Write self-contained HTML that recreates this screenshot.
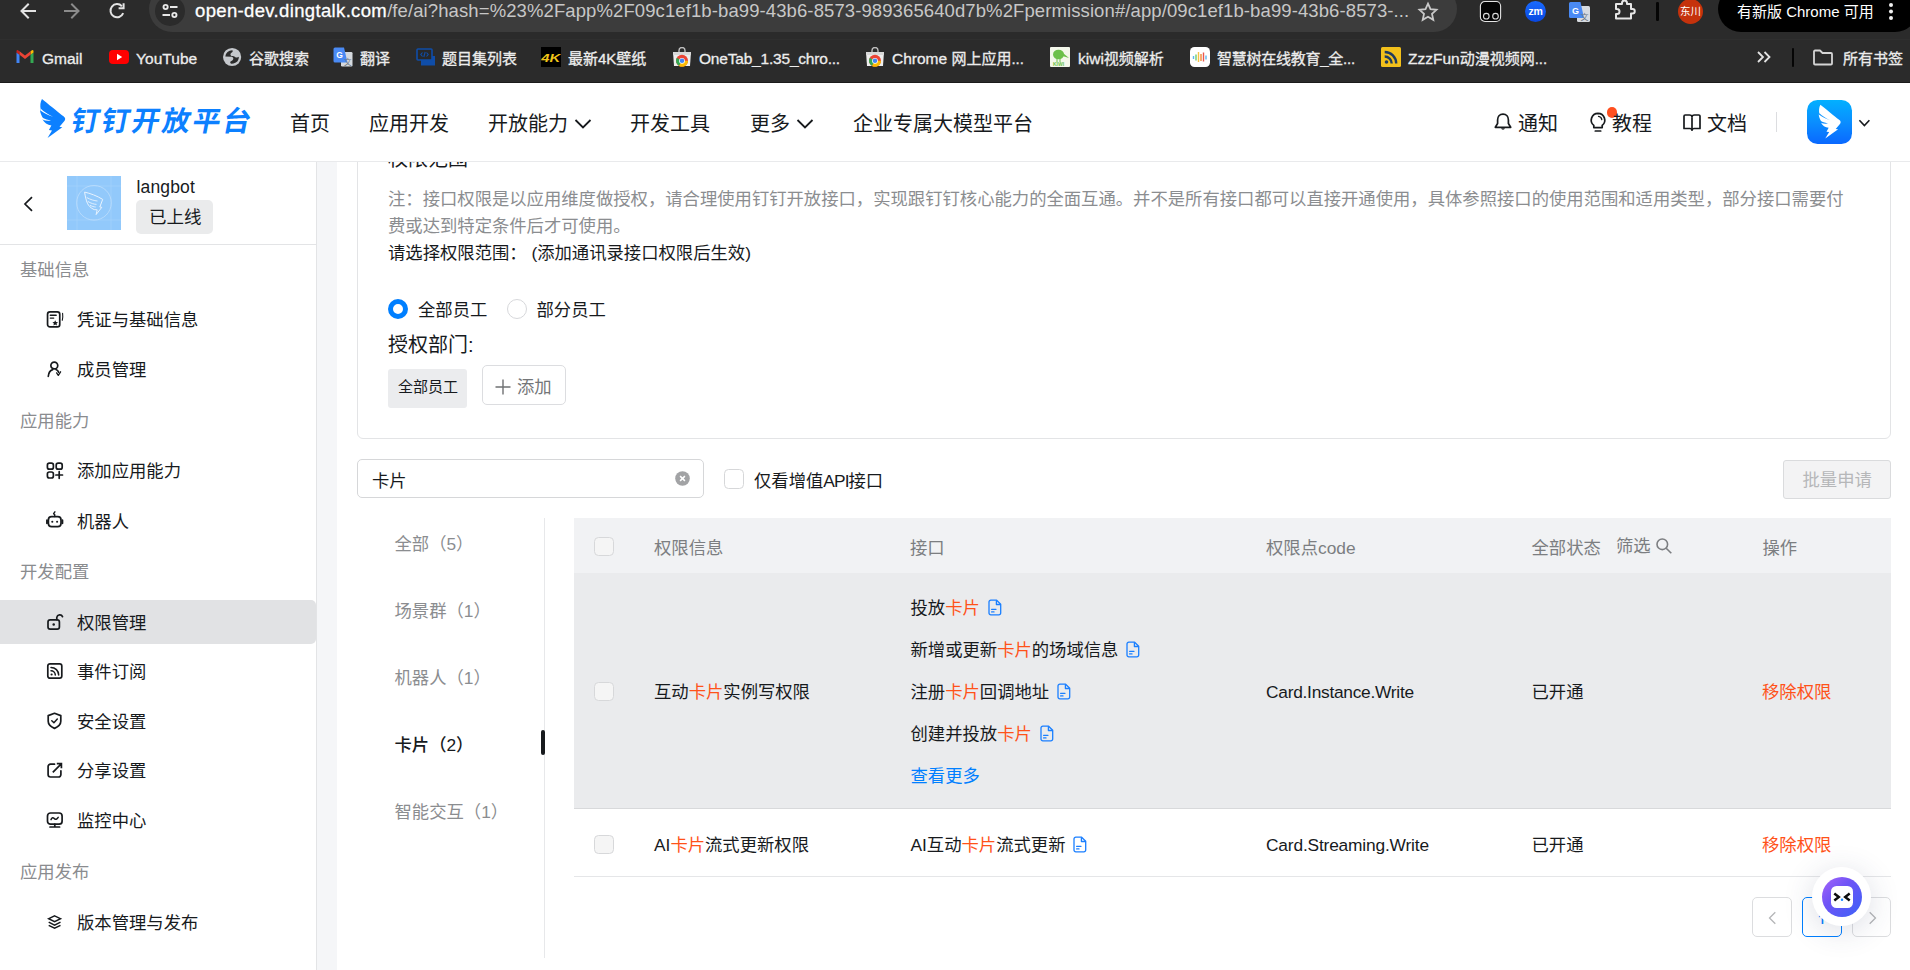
<!DOCTYPE html>
<html lang="zh-CN">
<head>
<meta charset="utf-8">
<title>钉钉开放平台</title>
<style>
*{box-sizing:border-box;margin:0;padding:0}
html,body{width:1910px;height:970px;overflow:hidden;background:#f5f6f8}
body{font-family:"Liberation Sans","Noto Sans CJK SC",sans-serif;font-size:17.5px;color:#171a1d;position:relative}
.abs{position:absolute}
svg{display:block}

/* ---------- browser chrome ---------- */
#chrome{position:absolute;left:0;top:0;width:1910px;height:83px;background:#2b2b2b;color:#e8e8e8;border-bottom:1px solid #1b1b1b}
#urlbar{position:absolute;left:149px;top:-14px;width:1308px;height:46px;border-radius:23px;background:#3c3c3c}
#urltext{position:absolute;left:195px;top:-1px;font-size:18.5px;line-height:24px;color:#c7c7c7;white-space:nowrap;letter-spacing:0.1px}
#tbsep{position:absolute;left:0;top:39px;width:1910px;height:1px;background:#2f2f2f}
#urltext b{-webkit-text-stroke:0.300px #fff;font-weight:normal;color:#fff;letter-spacing:0.35px}
.bm{-webkit-text-stroke:0.300px #ededed;position:absolute;top:46.700px;font-size:15.5px;line-height:24px;color:#ededed;white-space:nowrap}

/* ---------- page header ---------- */
#hdr{position:absolute;left:0;top:83px;width:1910px;height:79px;background:#fff;border-bottom:1px solid #e9eaec}
.nav{position:absolute;top:26.800px;font-size:20px;line-height:28px;color:#171a1d;white-space:nowrap}

#logot{position:absolute;left:67.500px;top:21px;font-size:28px;line-height:36px;font-weight:bold;color:#0c80ff;white-space:nowrap;letter-spacing:2.300px;transform:skewX(-11deg);transform-origin:left bottom}

/* ---------- sidebar ---------- */
#side{position:absolute;left:0;top:162px;width:317px;height:808px;background:#fff;border-right:1px solid #e3e4e6}
.sec{position:absolute;left:20px;font-size:17.330px;line-height:24px;color:#8a8c8f;white-space:nowrap}
.it{position:absolute;left:77px;font-size:17.330px;margin-top:0.400px;line-height:24px;color:#171a1d;white-space:nowrap}
.ic{position:absolute;left:45px;width:20px;height:20px}

/* ---------- main ---------- */
#card{position:absolute;left:357px;top:120px;width:1534px;height:319px;background:#fff;border:1px solid #e3e4e6;border-radius:6px}
.t{position:absolute;white-space:nowrap;line-height:24px;font-size:17.330px;margin-top:0.400px}
.tab{letter-spacing:0}
.hl{color:#ff5219}
.lnk{color:#007fff}
</style>
</head>
<body>

<!-- main content card (scrolled under header) -->
<!-- main -->
<div class="abs" style="left:337px;top:162px;width:1573px;height:808px;background:#fff"></div>
<div id="card"></div>
<div class="t" style="left:388px;top:146.5px;font-size:20px">权限范围</div>
<div class="abs" id="note" style="left:388px;top:185.500px;width:1471px;font-size:17.330px;line-height:27.300px;color:#8b8d90">注：接口权限是以应用维度做授权，请合理使用钉钉开放接口，实现跟钉钉核心能力的全面互通。并不是所有接口都可以直接开通使用，具体参照接口的使用范围和适用类型，部分接口需要付<br>费或达到特定条件后才可使用。<br><span style="color:#171a1d">请选择权限范围： (添加通讯录接口权限后生效)</span></div>
<div class="abs" style="left:388px;top:299px;width:20px;height:20px;border-radius:10px;border:5.500px solid #007fff;background:#fff"></div>
<div class="t" style="left:418px;top:297.5px;">全部员工</div>
<div class="abs" style="left:507px;top:299px;width:20px;height:20px;border-radius:10px;border:1.500px solid #d7d8db;background:#fff"></div>
<div class="t" style="left:536.5px;top:297.5px;">部分员工</div>
<div class="t" style="left:388px;top:332.5px;font-size:20px">授权部门:</div>
<div class="abs" style="left:388px;top:369px;width:79px;height:39px;border-radius:3px;background:#ebecee"></div>
<div class="t" style="left:398px;top:374.8px;font-size:15px">全部员工</div>
<div class="abs" style="left:482px;top:365px;width:84px;height:40px;border-radius:5px;border:1px solid #dcdde0;background:#fff"></div>
<svg class="abs" style="left:495px;top:379px" width="16" height="16" viewBox="0 0 16 16" fill="none" stroke="#6f7173" stroke-width="1.400"><path d="M8 0.500V15.500M0.500 8H15.500"/></svg>
<div class="t" style="left:517px;top:374.5px;color:#747678">添加</div>
<div class="abs" style="left:357px;top:459px;width:347px;height:39px;border-radius:5px;border:1px solid #d6d7d9;background:#fff"></div>
<div class="t" style="left:372px;top:468.3px;">卡片</div>
<svg class="abs" style="left:674.500px;top:471px" width="15" height="15" viewBox="0 0 15 15"><circle cx="7.500" cy="7.500" r="7.300" fill="#a2a3a5"/><path d="M5.100 5.100L9.900 9.900M9.900 5.100L5.100 9.900" stroke="#fff" stroke-width="1.500"/></svg>
<div class="abs" style="left:724px;top:469px;width:20px;height:20px;border:1.500px solid #d6d7d9;border-radius:4.500px;background:#fff"></div>
<div class="t" style="left:754px;top:468.3px;letter-spacing:0">仅看增值<span style="letter-spacing:-0.900px">API</span>接口</div>
<div class="abs" style="left:1783px;top:460px;width:108px;height:39px;border-radius:3px;border:1px solid #dadbdd;background:#f3f3f4"></div>
<div class="t" style="left:1802.5px;top:468px;color:#b6b7b9">批量申请</div>
<div class="abs" style="left:544px;top:518px;width:1px;height:440px;background:#e7e8ea"></div>
<div class="abs" style="left:541px;top:730px;width:4px;height:25px;border-radius:2px;background:#171a1d"></div>
<div class="t tab" style="left:394.5px;top:531.5px;color:#8b8d90">全部（5）</div>
<div class="t tab" style="left:394.5px;top:598.5px;color:#8b8d90">场景群（1）</div>
<div class="t tab" style="left:394.5px;top:665.5px;color:#8b8d90">机器人（1）</div>
<div class="t tab" style="left:394.5px;top:732.5px;color:#171a1d;font-weight:500">卡片（2）</div>
<div class="t tab" style="left:394.5px;top:799.5px;color:#8b8d90">智能交互（1）</div>
<div class="abs" style="left:574px;top:518px;width:1317px;height:55px;background:#f1f2f4"></div>
<div class="abs" style="left:574px;top:573px;width:1317px;height:235px;background:#eaebed"></div>
<div class="abs" style="left:574px;top:808px;width:1317px;height:1px;background:#d8d9db"></div>
<div class="abs" style="left:574px;top:876px;width:1317px;height:1px;background:#e5e6e8"></div>
<div class="abs" style="left:594.300px;top:537px;width:19.400px;height:19px;border:1.500px solid #d7d8da;border-radius:4.500px;background:#f5f5f5"></div>
<div class="t" style="left:654px;top:535.3px;color:#7c7e81">权限信息</div>
<div class="t" style="left:910px;top:535.3px;color:#7c7e81">接口</div>
<div class="t" style="left:1266px;top:535.3px;color:#7c7e81">权限点code</div>
<div class="t" style="left:1531.5px;top:535.3px;color:#7c7e81">全部状态</div>
<div class="t" style="left:1616px;top:534px;color:#7c7e81">筛选</div>
<svg class="abs" style="left:1655px;top:537px" width="18" height="18" viewBox="0 0 18 18" fill="none" stroke="#7c7e81" stroke-width="1.600"><circle cx="7.300" cy="7.300" r="5.300"/><path d="M11.200 11.200L16.300 16.300"/></svg>
<div class="t" style="left:1762.5px;top:535.3px;color:#7c7e81">操作</div>
<div class="abs" style="left:594.300px;top:682.3px;width:19.400px;height:19px;border:1.500px solid #d7d8da;border-radius:4.500px;background:#f5f5f5"></div>
<div class="t" style="left:654px;top:680px;">互动<span class="hl">卡片</span>实例写权限</div>
<div class="t" style="left:910.5px;top:596px;">投放<span class="hl">卡片</span></div>
<svg class="abs" style="left:987.82px;top:599.2px" width="14" height="17" viewBox="0 0 14 17" fill="none" stroke="#1a7fff" stroke-width="1.300" stroke-linejoin="round"><path d="M2.800 1.200H8.600L12.700 5.300V14A1.800 1.800 0 0 1 10.900 15.800H2.800A1.800 1.800 0 0 1 1 14V3A1.800 1.800 0 0 1 2.800 1.200z"/><path d="M8.400 1.400V5.500H12.500"/><path d="M3.600 10.300H8M3.600 12.900H6" stroke-linecap="round"/></svg>
<div class="t" style="left:910.5px;top:638px;">新增或更新<span class="hl">卡片</span>的场域信息</div>
<svg class="abs" style="left:1126.46px;top:641.2px" width="14" height="17" viewBox="0 0 14 17" fill="none" stroke="#1a7fff" stroke-width="1.300" stroke-linejoin="round"><path d="M2.800 1.200H8.600L12.700 5.300V14A1.800 1.800 0 0 1 10.900 15.800H2.800A1.800 1.800 0 0 1 1 14V3A1.800 1.800 0 0 1 2.800 1.200z"/><path d="M8.400 1.400V5.500H12.500"/><path d="M3.600 10.300H8M3.600 12.900H6" stroke-linecap="round"/></svg>
<div class="t" style="left:910.5px;top:680px;">注册<span class="hl">卡片</span>回调地址</div>
<svg class="abs" style="left:1057.14px;top:683.2px" width="14" height="17" viewBox="0 0 14 17" fill="none" stroke="#1a7fff" stroke-width="1.300" stroke-linejoin="round"><path d="M2.800 1.200H8.600L12.700 5.300V14A1.800 1.800 0 0 1 10.900 15.800H2.800A1.800 1.800 0 0 1 1 14V3A1.800 1.800 0 0 1 2.800 1.200z"/><path d="M8.400 1.400V5.500H12.500"/><path d="M3.600 10.300H8M3.600 12.900H6" stroke-linecap="round"/></svg>
<div class="t" style="left:910.5px;top:722px;">创建并投放<span class="hl">卡片</span></div>
<svg class="abs" style="left:1039.81px;top:725.2px" width="14" height="17" viewBox="0 0 14 17" fill="none" stroke="#1a7fff" stroke-width="1.300" stroke-linejoin="round"><path d="M2.800 1.200H8.600L12.700 5.300V14A1.800 1.800 0 0 1 10.900 15.800H2.800A1.800 1.800 0 0 1 1 14V3A1.800 1.800 0 0 1 2.800 1.200z"/><path d="M8.400 1.400V5.500H12.500"/><path d="M3.600 10.300H8M3.600 12.900H6" stroke-linecap="round"/></svg>
<div class="t" style="left:910.5px;top:764px;color:#007fff">查看更多</div>
<div class="t" style="left:1266px;top:680px;"><span style="letter-spacing:-0.260px">Card.Instance.Write</span></div>
<div class="t" style="left:1531.5px;top:680px;">已开通</div>
<div class="t" style="left:1762px;top:680px;color:#ff5219">移除权限</div>
<div class="abs" style="left:594.300px;top:834.8px;width:19.400px;height:19px;border:1.500px solid #d7d8da;border-radius:4.500px;background:#f5f5f5"></div>
<div class="t" style="left:654px;top:832.5px;">AI<span class="hl">卡片</span>流式更新权限</div>
<div class="t" style="left:910.5px;top:832.5px;"><span id="ai2">AI互动<span class="hl">卡片</span>流式更新</span></div>
<svg class="abs" style="left:1073px;top:835.7px" width="14" height="17" viewBox="0 0 14 17" fill="none" stroke="#1a7fff" stroke-width="1.300" stroke-linejoin="round"><path d="M2.800 1.200H8.600L12.700 5.300V14A1.800 1.800 0 0 1 10.900 15.800H2.800A1.800 1.800 0 0 1 1 14V3A1.800 1.800 0 0 1 2.800 1.200z"/><path d="M8.400 1.400V5.500H12.500"/><path d="M3.600 10.300H8M3.600 12.900H6" stroke-linecap="round"/></svg>
<div class="t" style="left:1266px;top:832.5px;"><span style="letter-spacing:-0.170px">Card.Streaming.Write</span></div>
<div class="t" style="left:1531.5px;top:832.5px;">已开通</div>
<div class="t" style="left:1762px;top:832.5px;color:#ff5219">移除权限</div>
<div class="abs" style="left:1752px;top:897px;width:40px;height:40px;border-radius:5px;border:1px solid #dcdddf;background:#fff"></div>
<svg class="abs" style="left:1767.500px;top:910.500px" width="9" height="14" viewBox="0 0 9 14" fill="none" stroke="#b4b5b7" stroke-width="1.300"><path d="M7.300 1.200L1.500 7L7.300 12.800"/></svg>
<div class="abs" style="left:1802px;top:897px;width:40px;height:40px;border-radius:5px;border:1.500px solid #007fff;background:#fff"></div>
<div class="abs" style="left:1803.500px;top:899px;width:37px;height:25px;overflow:hidden;color:#007fff;text-align:center;font-size:17.330px;line-height:24px"><div style="position:absolute;left:0;top:9.200px;width:37px">1</div></div>
<div class="abs" style="left:1852px;top:897px;width:39px;height:40px;border-radius:5px;border:1px solid #dcdddf;background:#fff"></div>
<svg class="abs" style="left:1867.500px;top:910.500px" width="9" height="14" viewBox="0 0 9 14" fill="none" stroke="#b4b5b7" stroke-width="1.300"><path d="M1.700 1.200L7.500 7L1.700 12.800"/></svg>
<div class="abs" style="left:1812px;top:867px;width:59px;height:59px;border-radius:30px;background:#fff;box-shadow:0 5px 30px rgba(50,60,100,0.170)"></div>
<div class="abs" style="left:1821.500px;top:876.500px;width:40px;height:40px;border-radius:20px;background:linear-gradient(135deg,#a865fa 0%,#6f54f6 40%,#3a62f8 100%)"></div>
<div class="abs" style="left:1831px;top:886px;width:22px;height:22px;border-radius:5.500px;background:#fff"></div>
<svg class="abs" style="left:1831px;top:886px" width="22" height="22" viewBox="0 0 22 22" fill="none" stroke="#0c0c0c" stroke-width="2.500" stroke-linejoin="miter" stroke-miterlimit="6"><path d="M3.300 7.500L7.800 11.050L3.300 14.500"/><path d="M18.700 7.500L14.200 11.050L18.700 14.500"/><circle cx="11" cy="13.700" r="1.250" fill="#1e8bff" stroke="none"/></svg>

<!-- sidebar -->
<div id="side">
  <svg class="abs" style="left:22px;top:33px" width="12" height="18" viewBox="0 0 12 18" fill="none" stroke="#171a1d" stroke-width="1.700"><path d="M10 2.200L3 9L10 15.800"/></svg>
  <div class="abs" style="left:67px;top:14px;width:54px;height:54px;background:#92c9fb"></div>
  <svg class="abs" style="left:67px;top:14px" width="54" height="54" viewBox="0 0 54 54" fill="none"><path d="M0 10H54M0 44H54M10 0V54M44 0V54" stroke="#a9d3fb" stroke-width="0.600"/><circle cx="27" cy="26.800" r="17.300" stroke="#c4e1fc" stroke-width="0.700"/><path d="M17.600 16.100C23 17.300 30 19.800 35.700 23.400L32.800 31L34.800 31.300L29.100 38.600L30.200 33.800L27.200 33.600C24 32.200 21.500 29.800 20.400 27.200C19.200 24.500 18.100 20 17.600 16.100z" stroke="#e8f3fe" stroke-width="1"/><path d="M19.800 21.600C23.500 23.600 27 24.700 30.500 25M20.800 25.400C24 27.400 26.800 28.200 29.500 28.400M23 29.200C25 30.400 26.800 30.900 28.700 31" stroke="#e8f3fe" stroke-width="0.900"/></svg>
  <div class="t" style="left:136.500px;top:13px;font-size:17.500px;letter-spacing:0.150px">langbot</div>
  <div class="abs" style="left:136px;top:38px;width:77px;height:34px;border-radius:5px;background:#eaebec"></div>
  <div class="t" style="left:149px;top:43px;font-size:17.500px">已上线</div>
  <div class="abs" style="left:0;top:82px;width:316px;height:1px;background:#e3e4e6"></div>
  <div class="sec" style="top:96px">基础信息</div>
  <svg class="abs" style="left:45px;top:148px" width="20" height="20" viewBox="0 0 20 20" fill="none" stroke="#171a1d" stroke-width="1.7" stroke-linecap="round" stroke-linejoin="round"><rect x="2.550" y="1.850" width="12.200" height="15.100" rx="2.400"/><path d="M5.300 5.300H11.200M5.300 8.100H8.700" stroke-width="1.400"/><path d="M10.200 10.200L11.050 11.950L13 12.200L11.550 13.500L11.950 15.400L10.200 14.450L8.450 15.400L8.850 13.500L7.400 12.200L9.350 11.950z" fill="#171a1d" stroke="none"/><path d="M17.600 3.200C17.900 5.500 17.800 8 17.300 10.300" stroke-width="1.100"/></svg>
  <div class="it" style="top:145.5px">凭证与基础信息</div>
  <svg class="abs" style="left:45px;top:198px" width="20" height="20" viewBox="0 0 20 20" fill="none" stroke="#171a1d" stroke-width="1.7" stroke-linecap="round" stroke-linejoin="round"><circle cx="9.300" cy="5.500" r="3.450"/><path d="M3.300 16.300C3.600 12.700 5.400 10.300 7.700 9.600M11 9.500C12.200 10 13.100 10.900 13.600 12.100" /><path d="M11.600 12.900L13.300 15.400L15.600 11.800" stroke-width="1.300"/></svg>
  <div class="it" style="top:196px">成员管理</div>
  <div class="sec" style="top:247px">应用能力</div>
  <svg class="abs" style="left:45px;top:299px" width="20" height="20" viewBox="0 0 20 20" fill="none" stroke="#171a1d" stroke-width="1.7" stroke-linecap="round" stroke-linejoin="round"><rect x="2.400" y="2.200" width="6" height="6" rx="2"/><rect x="11.200" y="2.200" width="6" height="6" rx="2"/><rect x="2.400" y="11" width="6" height="6" rx="2"/><path d="M14.200 10.700V17.300M10.900 14H17.500"/></svg>
  <div class="it" style="top:297px">添加应用能力</div>
  <svg class="abs" style="left:45px;top:348px" width="20" height="20" viewBox="0 0 20 20" fill="none" stroke="#171a1d" stroke-width="1.7" stroke-linecap="round" stroke-linejoin="round"><rect x="3.400" y="6.700" width="12.600" height="10" rx="3.200"/><path d="M9.700 6.500V4.600L8.600 3.700L9.900 1.800" stroke-width="1.400"/><path d="M2 10.300V13.300M17.400 10.300V13.300" stroke-width="1.900"/><circle cx="7.300" cy="11.700" r="1.050" fill="#171a1d" stroke="none"/><circle cx="12.100" cy="11.700" r="1.050" fill="#171a1d" stroke="none"/></svg>
  <div class="it" style="top:347.5px">机器人</div>
  <div class="sec" style="top:398px">开发配置</div>
  <div class="abs" style="left:0;top:438px;width:316px;height:44px;border-radius:0 5px 5px 0;background:#e1e2e4"></div>
  <svg class="abs" style="left:45px;top:450px" width="20" height="20" viewBox="0 0 20 20" fill="none" stroke="#171a1d" stroke-width="1.7" stroke-linecap="round" stroke-linejoin="round"><rect x="3" y="7.800" width="11.400" height="9.400" rx="2.200"/><path d="M11.800 7.600V5.300A3 3 0 0 1 17.500 4.600" /><circle cx="8.700" cy="12.500" r="1.250" fill="#171a1d" stroke="none"/></svg>
  <div class="it" style="top:448.5px">权限管理</div>
  <svg class="abs" style="left:45px;top:499px" width="20" height="20" viewBox="0 0 20 20" fill="none" stroke="#171a1d" stroke-width="1.7" stroke-linecap="round" stroke-linejoin="round"><rect x="2.800" y="2.800" width="14" height="14.400" rx="2.200"/><circle cx="6.600" cy="13.500" r="1.100" fill="#171a1d" stroke="none"/><path d="M6 9.800A4.300 4.300 0 0 1 10.300 14.100M6 6.400A7.700 7.700 0 0 1 13.700 14.100" stroke-width="1.500"/></svg>
  <div class="it" style="top:498px">事件订阅</div>
  <svg class="abs" style="left:45px;top:549px" width="20" height="20" viewBox="0 0 20 20" fill="none" stroke="#171a1d" stroke-width="1.7" stroke-linecap="round" stroke-linejoin="round"><path d="M9.500 2.300L15.800 4.600V10.300C15.800 13.500 13.200 15.800 9.500 17.400C5.800 15.800 3.200 13.500 3.200 10.300V4.600z"/><path d="M6.800 9.700L8.900 11.700L12.300 8" stroke-width="1.500"/></svg>
  <div class="it" style="top:547.5px">安全设置</div>
  <svg class="abs" style="left:45px;top:598px" width="20" height="20" viewBox="0 0 20 20" fill="none" stroke="#171a1d" stroke-width="1.7" stroke-linecap="round" stroke-linejoin="round"><path d="M9.500 4.200H5.500A2.400 2.400 0 0 0 3.100 6.600V14.600A2.400 2.400 0 0 0 5.500 17H13.500A2.400 2.400 0 0 0 15.900 14.600V10.800"/><path d="M7.800 12.300L16 4.100M11.800 3.700H16.400V8.300" stroke-linejoin="miter" stroke-linecap="butt"/></svg>
  <div class="it" style="top:597px">分享设置</div>
  <svg class="abs" style="left:45px;top:648px" width="20" height="20" viewBox="0 0 20 20" fill="none" stroke="#171a1d" stroke-width="1.7" stroke-linecap="round" stroke-linejoin="round"><rect x="2.500" y="3" width="14.600" height="11.200" rx="3"/><path d="M9.800 14.200V16.600M5 17H14.600"/><path d="M6 9.600C7 7.400 8 7.400 9.400 8.600S11.700 9.600 13.200 7.400" stroke-width="1.500"/></svg>
  <div class="it" style="top:646.5px">监控中心</div>
  <div class="sec" style="top:698px">应用发布</div>
  <svg class="abs" style="left:45px;top:750px" width="20" height="20" viewBox="0 0 20 20" fill="none" stroke="#171a1d" stroke-width="1.5" stroke-linecap="round" stroke-linejoin="round"><path d="M9.600 3.800L15.500 6.700L9.600 9.600L3.700 6.700z" stroke-linejoin="miter"/><path d="M3.700 10.200L9.600 13.100L15.500 10.200M3.700 13.300L9.600 16.200L15.500 13.300" stroke-linejoin="miter" stroke-linecap="butt"/></svg>
  <div class="it" style="top:748.5px">版本管理与发布</div>
</div>

<!-- page header -->
<div id="hdr">
  <!-- logo (coords relative to header top=83) -->
  <svg class="abs" style="left:38px;top:14px" width="30" height="44" viewBox="0 0 30 44"><path d="M3.970 1.960C9 6 20 15 25.800 19.600C27.300 20.800 27.600 22.300 26.600 23.800L21.500 29.800L24.300 30.200L9.500 40.900L14 33.400L10.900 32.900L13.400 28.400C9.500 28 6 25.800 4.500 22.300L5.300 21.600C3.500 19 2.200 16 2 13.100L2.700 12.300C2 9 2.200 5 3.970 1.960z" fill="#0c80ff"/><path d="M2.100 13.300C6 16.200 10 18.400 15 19.700C10.300 17.500 6 14.700 2.800 11.700z" fill="#fff"/><path d="M4.300 22.600C7 23.800 10 24 13 23.600C10 23.100 7 22.300 5 21.100z" fill="#fff"/></svg>
  <div id="logot">钉钉开放平台</div>
  <div class="nav" style="left:290px">首页</div>
  <div class="nav" style="left:369px">应用开发</div>
  <div class="nav" style="left:488px">开放能力</div>
  <svg class="abs" style="left:574px;top:35px" width="18" height="12" viewBox="0 0 18 12" fill="none" stroke="#171a1d" stroke-width="1.800"><path d="M1.500 2L9 9.500L16.500 2"/></svg>
  <div class="nav" style="left:630px">开发工具</div>
  <div class="nav" style="left:750px">更多</div>
  <svg class="abs" style="left:796px;top:35px" width="18" height="12" viewBox="0 0 18 12" fill="none" stroke="#171a1d" stroke-width="1.800"><path d="M1.500 2L9 9.500L16.500 2"/></svg>
  <div class="nav" style="left:853px">企业专属大模型平台</div>

  <!-- bell -->
  <svg class="abs" style="left:1493px;top:29px" width="20" height="21" viewBox="0 0 20 21" fill="none" stroke="#171a1d" stroke-width="1.700" stroke-linejoin="round"><path d="M10 2.200C6.600 2.200 4.600 4.800 4.600 8V11.500L2.300 15.300H17.700L15.400 11.500V8C15.400 4.800 13.400 2.200 10 2.200z"/><path d="M8 16.200A2.100 2.100 0 0 0 12 16.200z" fill="#171a1d" stroke="none"/></svg>
  <div class="nav" style="left:1518px">通知</div>
  <!-- bulb -->
  <svg class="abs" style="left:1588px;top:28px" width="20" height="23" viewBox="0 0 20 23" fill="none" stroke="#171a1d" stroke-width="1.700" stroke-linecap="round"><path d="M10 2.300A6.800 6.800 0 0 0 5.800 14.400V16.600H14.200V14.400A6.800 6.800 0 0 0 10 2.300z" stroke-linejoin="round"/><path d="M7.300 20H12.700"/><path d="M10.500 5.300A3.800 3.800 0 0 1 13.800 8.600" stroke-width="1.300"/></svg>
  <div class="abs" style="left:1606.500px;top:24px;width:10.500px;height:10.500px;border-radius:6px;background:#ff4f1f"></div>
  <div class="nav" style="left:1612px">教程</div>
  <!-- book -->
  <svg class="abs" style="left:1682px;top:29px" width="20" height="21" viewBox="0 0 20 21" fill="none" stroke="#171a1d" stroke-width="1.700" stroke-linejoin="round"><path d="M2 4.200A1.200 1.200 0 0 1 3.200 3H7.500C8.900 3 10 3.800 10 5C10 3.800 11.100 3 12.500 3H16.800A1.200 1.200 0 0 1 18 4.200V16.500H12.200C11 16.500 10 17.200 10 18.200C10 17.200 9 16.500 7.800 16.500H2z"/><path d="M10 5.500V17.200"/></svg>
  <div class="nav" style="left:1707px">文档</div>
  <div class="abs" style="left:1776px;top:29px;width:1px;height:20px;background:#dcdde0"></div>
  <!-- avatar -->
  <div class="abs" style="left:1807px;top:17px;width:45px;height:44px;border-radius:10.500px;background:linear-gradient(180deg,#02b0ff 0%,#0a8eff 50%,#0a68ff 100%)"></div>
  <svg class="abs" style="left:1817.250px;top:20.300px" width="26.100" height="38.300" viewBox="0 0 30 44"><path d="M3.970 1.960C9 6 20 15 25.800 19.600C27.300 20.800 27.600 22.300 26.600 23.800L21.500 29.800L24.300 30.200L9.500 40.900L14 33.400L10.900 32.900L13.400 28.400C9.500 28 6 25.800 4.500 22.300L5.300 21.600C3.500 19 2.200 16 2 13.100L2.700 12.300C2 9 2.200 5 3.970 1.960z" fill="#fff"/><path d="M2.100 13.300C6 16.200 10 18.400 15 19.700C10.300 17.500 6 14.700 2.800 11.700z" fill="#1296ff"/><path d="M4.300 22.600C7 23.800 10 24 13 23.600C10 23.100 7 22.300 5 21.100z" fill="#0e8cff"/></svg>
  <svg class="abs" style="left:1857px;top:35px" width="16" height="11" viewBox="0 0 16 11" fill="none" stroke="#171a1d" stroke-width="1.600"><path d="M2.400 2.200L7.400 7.500L12.400 2.200"/></svg>
</div>

<!-- browser chrome -->
<div id="chrome">
  <div id="tbsep"></div>
  <!-- back / forward / reload -->
  <svg class="abs" style="left:19px;top:2px" width="18" height="18" viewBox="0 0 18 18" fill="none" stroke="#e3e3e3" stroke-width="2" stroke-linecap="square" stroke-linejoin="miter"><path d="M16 9H3.5M9 2.5L2.5 9L9 15.5"/></svg>
  <svg class="abs" style="left:63px;top:2px" width="18" height="18" viewBox="0 0 18 18" fill="none" stroke="#8b8b8b" stroke-width="2" stroke-linecap="square" stroke-linejoin="miter"><path d="M2 9H14.5M9 2.5L15.5 9L9 15.5"/></svg>
  <svg class="abs" style="left:107px;top:1px" width="20" height="20" viewBox="0 0 20 20" fill="none" stroke="#e3e3e3" stroke-width="2"><path d="M16.2 12.2A6.6 6.6 0 1 1 14.9 5.2"/><path d="M16.6 2.2V7.2H11.6" stroke-linejoin="miter"/></svg>
  <div id="urlbar"></div>
  <div class="abs" style="left:155px;top:-4px;width:30px;height:30px;border-radius:15px;background:#2b2b2b"></div>
  <svg class="abs" style="left:161px;top:2px" width="18" height="18" viewBox="0 0 18 18" fill="none" stroke="#e8e8e8" stroke-width="1.9"><circle cx="4.6" cy="5" r="2.1"/><path d="M9 5H16.5M1.5 13H9" stroke-linecap="butt"/><circle cx="13.4" cy="13" r="2.1"/></svg>
  <div id="urltext"><b>open-dev.dingtalk.com</b>/fe/ai?hash=%23%2Fapp%2F09c1ef1b-ba99-43b6-8573-989365640d7b%2Fpermission#/app/09c1ef1b-ba99-43b6-8573-...</div>
  <!-- star -->
  <svg class="abs" style="left:1417px;top:1px" width="22" height="21" viewBox="0 0 22 21" fill="none" stroke="#c9c9c9" stroke-width="1.8" stroke-linejoin="miter"><path d="M11 2.6l2.5 5.6 6 .6-4.5 4.1 1.3 6-5.3-3.1-5.3 3.1 1.3-6L2.5 8.8l6-.6z"/></svg>
  <!-- mask ext -->
  <svg class="abs" style="left:1479px;top:0px" width="23" height="23" viewBox="0 0 23 23"><rect x="1.400" y="1.500" width="20.200" height="20" rx="4.500" fill="#050505" stroke="#e4e4e4" stroke-width="1.100"/><circle cx="7.300" cy="16.200" r="2.800" fill="none" stroke="#dcdcdc" stroke-width="1.100"/><circle cx="16.500" cy="16.200" r="2.800" fill="none" stroke="#dcdcdc" stroke-width="1.100"/></svg>
  <!-- zm -->
  <div class="abs" style="left:1525px;top:0.700px;width:21px;height:21px;border-radius:10.500px;background:linear-gradient(180deg,#1a6bff,#0847e0);color:#fff;font-size:10.5px;font-weight:bold;line-height:21px;text-align:center;letter-spacing:-0.3px">zm</div>
  <!-- translate -->
  <svg class="abs" style="left:1568px;top:1px" width="23" height="22" viewBox="0 0 23 22"><rect x="9" y="5" width="13" height="16" rx="1.5" fill="#d7dbe0"/><path d="M1 2.5A1.5 1.5 0 0 1 2.500 1H12.500L16 17H2.500A1.5 1.500 0 0 1 1 15.500z" fill="#4a8af4"/><text x="4" y="12.500" font-family="Liberation Sans, sans-serif" font-size="9" font-weight="bold" fill="#fff">G</text><text x="12.500" y="18.500" font-family="Liberation Sans, Noto Sans CJK SC, sans-serif" font-size="8" fill="#6d7782">文</text></svg>
  <!-- puzzle -->
  <svg class="abs" style="left:1613px;top:-2px" width="24" height="24" viewBox="0 0 24 24" fill="none" stroke="#e6e6e6" stroke-width="2" stroke-linejoin="round"><path d="M3 6H9V5A2.500 2.500 0 0 1 14 5V6H18V11H19.500A2.250 2.250 0 0 1 19.500 15.500H18V20.500H3V16H4A2.500 2.500 0 0 0 4 11H3z"/></svg>
  <div class="abs" style="left:1656px;top:1.500px;width:2.600px;height:19px;background:#050505;border-radius:1.300px"></div>
  <!-- profile -->
  <div class="abs" style="left:1678px;top:-1px;width:25px;height:25px;border-radius:13px;background:#c5320c;color:#fff;font-size:10.500px;line-height:25px;text-align:center">东川</div>
  <!-- update pill -->
  <div class="abs" style="left:1718px;top:-14px;width:200px;height:46px;border-radius:23px;background:#000"></div>
  <div class="abs" style="left:1737px;top:0px;font-size:15px;line-height:24px;color:#fff;white-space:nowrap" id="upd">有新版 Chrome 可用</div>
  <div class="abs" style="left:1889px;top:3px;width:4px;height:4px;border-radius:2px;background:#f0f0f0;box-shadow:0 6.5px 0 #f0f0f0,0 13px 0 #f0f0f0"></div>
  <!-- bookmarks -->
  <svg class="abs" style="left:15px;top:47px" width="20" height="20" viewBox="0 0 20 20"><path d="M1.500 16V5.500L4.500 7.800V16z" fill="#4285f4"/><path d="M15.500 7.800L18.500 5.500V16H15.500z" fill="#34a853"/><path d="M15.500 4.300L17 3.200A0.950 0.950 0 0 1 18.500 4V5.500L15.500 7.800z" fill="#fbbc04"/><path d="M1.500 5.500V4A0.950 0.950 0 0 1 3 3.200L4.500 4.300V7.800z" fill="#c5221f"/><path d="M4.500 4.300L10 8.500L15.500 4.300V7.800L10 12L4.500 7.800z" fill="#ea4335"/></svg>
  <div class="bm" style="left:42px;">Gmail</div>
  <svg class="abs" style="left:109px;top:47px" width="20" height="20" viewBox="0 0 20 20"><rect x="0" y="3" width="20" height="14" rx="4" fill="#ff0000"/><path d="M8 6.800L13.200 10L8 13.200z" fill="#fff"/></svg>
  <div class="bm" style="left:136px;letter-spacing:0.05px">YouTube</div>
  <svg class="abs" style="left:222px;top:47px" width="20" height="20" viewBox="0 0 20 20"><circle cx="10.100" cy="10" r="9.100" fill="#c5c8cc"/><path d="M10.200 3.200A6.900 6.900 0 0 0 3.300 9.500L9.400 9.700C10.800 9.900 11.500 10.800 11.300 11.800C11.100 13 10.300 13.600 9 14.200C8.300 14.600 8.100 15.200 8.300 15.700C8.600 16.700 10 16.800 11.500 16.500A6.900 6.900 0 0 0 16.900 9.800C15.700 10.900 14 10.900 12.800 9.700C11.800 9.100 10.600 9 9.900 9.200C8.800 8.500 8.200 7.600 8.500 6.900C8.700 6 9.500 5.600 10.400 4.900C10.900 4.300 10.800 3.600 10.200 3.200z" fill="#2b2b2b"/></svg>
  <div class="bm" style="left:249px;font-size:15px">谷歌搜索</div>
  <svg class="abs" style="left:333px;top:47px" width="20" height="20" viewBox="0 0 20 20"><rect x="8" y="5" width="11.500" height="14.500" rx="1.300" fill="#d5d9de"/><path d="M0.500 2A1.500 1.500 0 0 1 2 0.500H11L14.500 15.500H2A1.500 1.500 0 0 1 0.500 14z" fill="#4a8af4"/><text x="3.200" y="11" font-family="Liberation Sans, sans-serif" font-size="8.500" font-weight="bold" fill="#fff">G</text><text x="11" y="17.500" font-family="Liberation Sans, Noto Sans CJK SC, sans-serif" font-size="7.500" fill="#6d7782">文</text></svg>
  <div class="bm" style="left:360px;font-size:15px">翻译</div>
  <svg class="abs" style="left:416px;top:47px" width="20" height="20" viewBox="0 0 20 20"><path d="M5 9H19V18.500H5z" fill="#0f4da8"/><rect x="1" y="2" width="15" height="11" rx="1" fill="#282828" stroke="#0f4da8" stroke-width="1.600"/><path d="M6.500 5.500L4.800 7.500L6.500 9.500M10.500 5.500L12.200 7.500L10.500 9.500M9.200 5L7.800 10" fill="none" stroke="#0f4da8" stroke-width="1.100"/></svg>
  <div class="bm" style="left:442px;font-size:15px">题目集列表</div>
  <svg class="abs" style="left:541px;top:47px" width="20" height="20" viewBox="0 0 20 20"><rect width="20" height="20" fill="#000"/><text x="0.300" y="14.500" font-family="Liberation Sans, sans-serif" font-size="11.500" font-weight="bold" font-style="italic" fill="#f0c419" textLength="19" lengthAdjust="spacingAndGlyphs">4K</text></svg>
  <div class="bm" style="left:568px;font-size:15px">最新4K壁纸</div>
  <svg class="abs" style="left:672px;top:47px" width="20" height="20" viewBox="0 0 20 20"><path d="M7 5V3.500A3 3 0 0 1 13 3.500V5" fill="none" stroke="#bdbdbd" stroke-width="1.400"/><path d="M1 5H19L18 19H2z" fill="#eeeeee"/><path d="M1 5H19L18.800 8H1.200z" fill="#d9d9d9"/><circle cx="10" cy="13.800" r="6" fill="#ea4335"/><path d="M10 13.800L4.800 10.800A6 6 0 0 0 7 19z" fill="#34a853"/><path d="M10 13.800L7 19A6 6 0 0 0 16 13.800z" fill="#fbbc04"/><circle cx="10" cy="13.800" r="2.900" fill="#fff"/><circle cx="10" cy="13.800" r="2.250" fill="#4285f4"/></svg>
  <div class="bm" style="left:699px;letter-spacing:-0.2px">OneTab_1.35_chro...</div>
  <svg class="abs" style="left:865px;top:47px" width="20" height="20" viewBox="0 0 20 20"><path d="M7 5V3.500A3 3 0 0 1 13 3.500V5" fill="none" stroke="#bdbdbd" stroke-width="1.400"/><path d="M1 5H19L18 19H2z" fill="#eeeeee"/><path d="M1 5H19L18.800 8H1.200z" fill="#d9d9d9"/><circle cx="10" cy="13.800" r="6" fill="#ea4335"/><path d="M10 13.800L4.800 10.800A6 6 0 0 0 7 19z" fill="#34a853"/><path d="M10 13.800L7 19A6 6 0 0 0 16 13.800z" fill="#fbbc04"/><circle cx="10" cy="13.800" r="2.900" fill="#fff"/><circle cx="10" cy="13.800" r="2.250" fill="#4285f4"/></svg>
  <div class="bm" style="left:892px;font-size:15px"><span style="font-size:15.5px">Chrome </span>网上应用...</div>
  <svg class="abs" style="left:1050px;top:47px" width="20" height="20" viewBox="0 0 20 20"><rect width="20" height="20" rx="1" fill="#f3f7ea"/><ellipse cx="8.500" cy="7.500" rx="5.500" ry="4.800" fill="#6cc04a"/><path d="M13 6L19 11L12.500 9z" fill="#6cc04a"/><path d="M7 12V15M10 12V15" stroke="#6cc04a" stroke-width="1"/><text x="3" y="19" font-family="Liberation Sans, sans-serif" font-size="5" font-weight="bold" fill="#6cc04a">KIWI</text></svg>
  <div class="bm" style="left:1078px;font-size:15px"><span style="font-size:15.5px">kiwi</span>视频解析</div>
  <svg class="abs" style="left:1190px;top:47px" width="20" height="20" viewBox="0 0 20 20"><rect width="20" height="20" rx="4.500" fill="#fff"/><path d="M3.500 9V12" stroke="#5db7f0" stroke-width="1.400"/><path d="M6 7.500V13.500" stroke="#6fcf6f" stroke-width="1.400"/><path d="M8.500 5V15" stroke="#f6c344" stroke-width="1.400"/><path d="M11 7V14" stroke="#f0893a" stroke-width="1.400"/><path d="M13.500 5.500V14.500" stroke="#e9564f" stroke-width="1.400"/><path d="M16 8.500V12.500" stroke="#5db7f0" stroke-width="1.400"/></svg>
  <div class="bm" style="left:1217px;font-size:15px;letter-spacing:-0.250px">智慧树在线教育_全...</div>
  <svg class="abs" style="left:1381px;top:47px" width="20" height="20" viewBox="0 0 20 20"><rect width="20" height="20" rx="1.500" fill="#f2c01b"/><circle cx="5.500" cy="15" r="1.800" fill="#1f3a5f"/><path d="M3.700 9.500A7 7 0 0 1 10.700 16.500M3.700 5A11.500 11.500 0 0 1 15.200 16.500" fill="none" stroke="#1f3a5f" stroke-width="2.400"/></svg>
  <div class="bm" style="left:1408px;font-size:15px"><span style="font-size:15.5px">ZzzFun</span>动漫视频网...</div>
  <svg class="abs" style="left:1756px;top:50px" width="16" height="14" viewBox="0 0 16 14" fill="none" stroke="#e3e3e3" stroke-width="1.800"><path d="M2 2L7 7L2 12M8.500 2L13.500 7L8.500 12"/></svg>
  <div class="abs" style="left:1791.500px;top:48px;width:2.600px;height:19px;background:#050505;border-radius:1.300px"></div>
  <svg class="abs" style="left:1812px;top:48px" width="22" height="19" viewBox="0 0 22 19" fill="none" stroke="#d5d5d5" stroke-width="1.800" stroke-linejoin="round"><path d="M2 3.500A1 1 0 0 1 3 2.500H8L10.500 5H19A1 1 0 0 1 20 6V15.500A1 1 0 0 1 19 16.500H3A1 1 0 0 1 2 15.500z"/></svg>
  <div class="bm" style="left:1843px;font-size:15px">所有书签</div>
</div>

</body>
</html>
